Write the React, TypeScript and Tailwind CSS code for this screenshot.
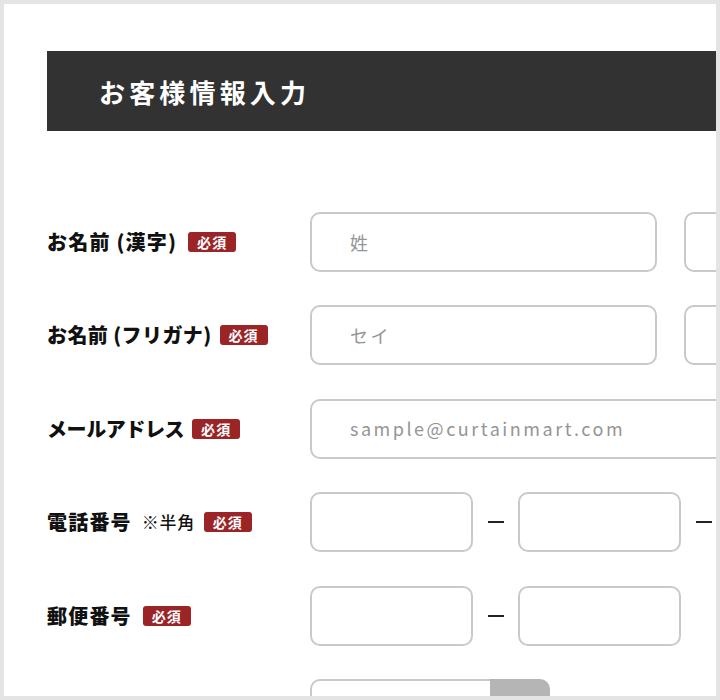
const font = "font-['Noto_Sans_CJK_JP','Noto_Sans',sans-serif]";

const Badge = ({ gap = "ml-2" }: { gap?: string }) => (
  <span
    className={`${gap} inline-flex h-[20px] w-[48px] shrink-0 items-center justify-center rounded-[3px] bg-[#9b2427] text-[14px] font-bold leading-none tracking-[0.08em] text-white`}
  >
    必須
  </span>
);

const Field = ({ width, placeholder }: { width: string; placeholder?: string }) => (
  <div
    className={`flex h-[60px] shrink-0 items-center rounded-[10px] border-2 border-[#c9c9c9] bg-white pl-[38px] text-[18px] tracking-[0.14em] text-[#959595] ${width}`}
  >
    {placeholder}
  </div>
);

const Dash = () => (
  <span className="flex w-[45px] shrink-0 items-center justify-center">
    <span className="h-[2px] w-[16px] bg-[#222]" />
  </span>
);

const Row = ({ label, children }: { label: React.ReactNode; children: React.ReactNode }) => (
  <div className="flex items-center">
    <div className="flex w-[263px] shrink-0 items-center text-[20px] font-black tracking-[0.06em] text-[#111]">
      {label}
    </div>
    <div className="flex items-center">{children}</div>
  </div>
);

export default function App() {
  return (
    <div className={`h-[700px] w-[720px] overflow-hidden border-4 border-[#e4e4e4] bg-white ${font}`}>
      <div className="w-[900px] pl-[43px] pt-[47px]">
        <div className="flex h-[80px] items-center bg-[#323232] pl-[52px] text-[26px] font-bold tracking-[0.16em] text-white">
          お客様情報入力
        </div>

        <div className="mt-[81px] flex flex-col gap-[33.4px]">
          <Row
            label={
              <>
                <span>お名前 (漢字)</span>
                <Badge gap="ml-[11px]" />
              </>
            }
          >
            <Field width="w-[347px]" placeholder="姓" />
            <div className="ml-[27px]">
              <Field width="w-[347px]" placeholder="名" />
            </div>
          </Row>

          <Row
            label={
              <>
                <span className="tracking-[0.02em]">お名前 (フリガナ)</span>
                <Badge />
              </>
            }
          >
            <Field width="w-[347px]" placeholder="セイ" />
            <div className="ml-[27px]">
              <Field width="w-[347px]" placeholder="メイ" />
            </div>
          </Row>

          <Row
            label={
              <>
                <span className="tracking-[-0.02em]">メールアドレス</span>
                <Badge />
              </>
            }
          >
            <Field width="w-[560px]" placeholder="sample@curtainmart.com" />
          </Row>

          <Row
            label={
              <>
                <span>電話番号</span>
                <span className="ml-2.5 text-[17px] font-medium tracking-[0.04em]">※半角</span>
                <Badge gap="ml-[9px]" />
              </>
            }
          >
            <Field width="w-[163px]" />
            <Dash />
            <Field width="w-[163px]" />
            <Dash />
            <Field width="w-[163px]" />
          </Row>

          <Row
            label={
              <>
                <span>郵便番号</span>
                <Badge gap="ml-[11px]" />
              </>
            }
          >
            <Field width="w-[163px]" />
            <Dash />
            <Field width="w-[163px]" />
          </Row>

          <Row label={<span />}>
            <div className="flex h-[60px]">
              <div className="h-[60px] w-[180px] rounded-l-[10px] border-2 border-r-0 border-[#c9c9c9] bg-white" />
              <div className="h-[60px] w-[60px] rounded-r-[10px] bg-[#b5b5b5]" />
            </div>
          </Row>
        </div>
      </div>
    </div>
  );
}
